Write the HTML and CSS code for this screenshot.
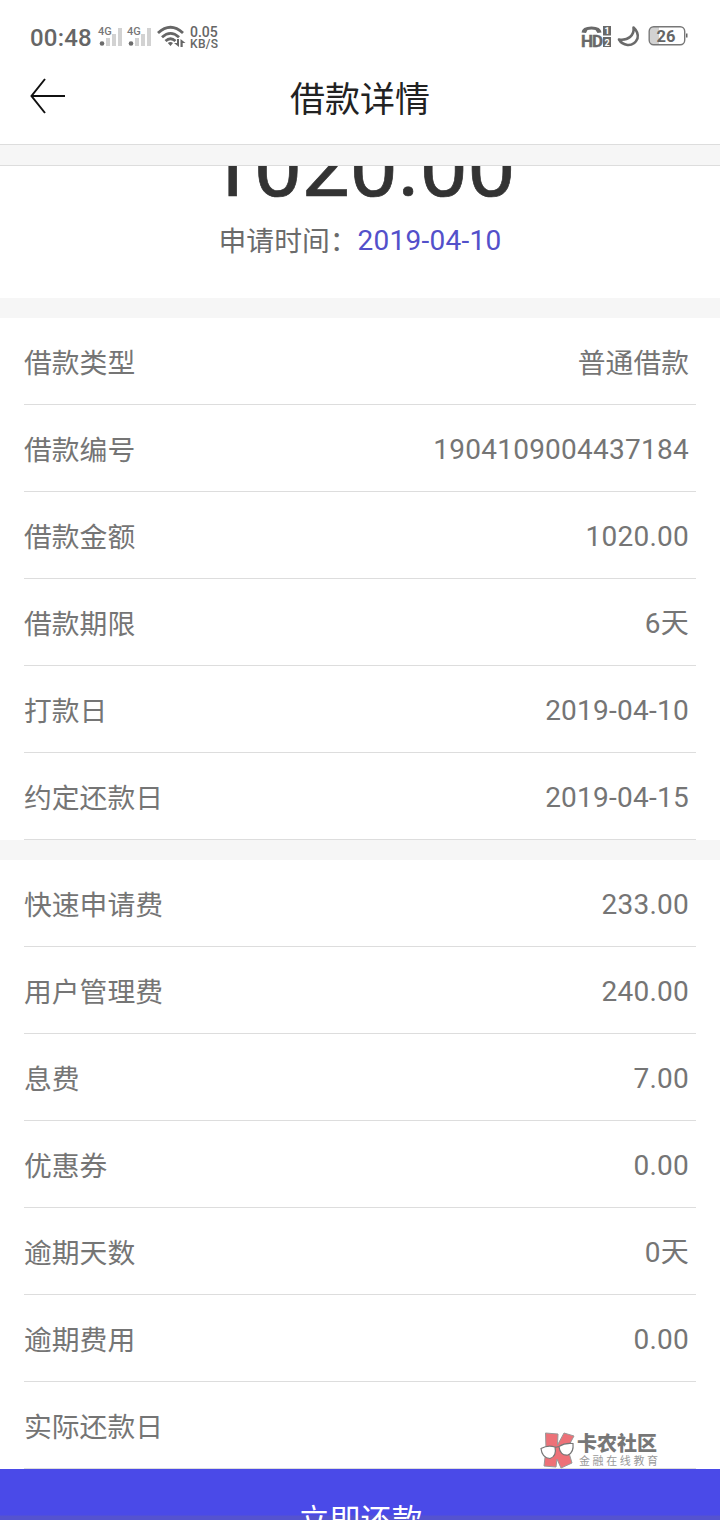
FILE: index.html
```html
<!DOCTYPE html>
<html lang="zh-CN">
<head>
<meta charset="utf-8">
<title>借款详情</title>
<link rel="stylesheet" href="styles.css">
</head>
<body>
<div class="screen">
  <header class="statusbar">
    <span class="clock">00:48</span>
    <svg class="signals" width="54" height="24" viewBox="0 0 54 24">
      <g id="sig">
        <text x="0" y="10" class="net">4G</text>
        <circle cx="4" cy="18.500" r="2.300" fill="#6b6b6b"/>
        <path d="M8 13h4v8H8zM14 9h4v12h-4zM20 3h4v18h-4z" fill="#d2d2d2"/>
      </g>
      <use href="#sig" x="29"/>
    </svg>
    <svg class="wifi" width="30" height="24" viewBox="0 0 30 24">
      <g fill="none" stroke="#666" stroke-width="2.800">
        <path d="M1 8Q13.500 -3.500 26 8"/>
        <path d="M5 12.300Q13.500 4.500 22 12.300"/>
        <path d="M8.500 16Q13.500 11.500 18.500 16"/>
      </g>
      <path d="M10.800 18Q13.500 16 16 18L13.500 21zM22 14v8l-5-4h3v-4zM23.500 14l5 4h-2.800v4h-2.200z" fill="#666"/>
    </svg>
    <div class="speed"><span>0.05</span><span>KB/S</span></div>
    <svg class="hd" width="31" height="24" viewBox="0 0 31 24">
      <path d="M.5 7.500Q1 1.500 10.500 1.500Q20 1.500 20.500 7.500L16.500 8L14.500 5Q10.500 4 6.500 5L5 8z" fill="#696969"/>
      <text x="0" y="21.500" class="hd-text">HD</text>
      <path d="M22 1h8v9.500h-8zM22 12h8v10h-8z" fill="#696969"/>
      <text x="23.500" y="9.300" class="sim">1</text><text x="23.500" y="20.500" class="sim">2</text>
    </svg>
    <svg class="moon" width="24" height="24" viewBox="0 0 24 24">
      <path d="M16.500 2.500Q22 7.500 20.500 13.500Q17.500 20.500 10.500 20Q4.500 19 2 14.500Q9 15.500 13 12Q17.500 8 16.500 2.500z" fill="none" stroke="#6a6a6a" stroke-width="2.600" stroke-linejoin="round"/>
    </svg>
    <svg class="battery" width="41" height="22" viewBox="0 0 41 22">
      <path d="M5 2h6v17H5Q2 19 2 16V5Q2 2 5 2z" fill="#d2d2d2"/>
      <rect x="1.200" y="1.700" width="35.500" height="18" rx="4.500" fill="none" stroke="#777" stroke-width="1.400"/>
      <path d="M38 8.500h1.500v4h-1.500z" fill="#666"/>
      <text x="18" y="16.800" text-anchor="middle" class="charge">26</text>
    </svg>
  </header>
  <nav class="titlebar">
    <svg class="back" width="38" height="38" viewBox="0 0 38 38"><path d="M17 2L3.500 19L17 36M3.500 19H37" fill="none" stroke="#111" stroke-width="2"/></svg>
    <h1>借款详情</h1>
  </nav>
  <div class="band"></div>
  <section class="summary">
    <div class="amount">1020.00</div>
    <div class="applied"><span>申请时间：</span><span class="date">2019-04-10</span></div>
  </section>
  <section class="group">
    <div class="row"><span>借款类型</span><span>普通借款</span></div>
    <div class="row"><span>借款编号</span><span class="num">1904109004437184</span></div>
    <div class="row"><span>借款金额</span><span class="num">1020.00</span></div>
    <div class="row"><span>借款期限</span><span class="num">6天</span></div>
    <div class="row"><span>打款日</span><span class="num">2019-04-10</span></div>
    <div class="row"><span>约定还款日</span><span class="num">2019-04-15</span></div>
  </section>
  <section class="group">
    <div class="row"><span>快速申请费</span><span class="num">233.00</span></div>
    <div class="row"><span>用户管理费</span><span class="num">240.00</span></div>
    <div class="row"><span>息费</span><span class="num">7.00</span></div>
    <div class="row"><span>优惠券</span><span class="num">0.00</span></div>
    <div class="row"><span>逾期天数</span><span class="num">0天</span></div>
    <div class="row"><span>逾期费用</span><span class="num">0.00</span></div>
    <div class="row"><span>实际还款日</span></div>
  </section>
  <div class="watermark">
    <svg width="36" height="38" viewBox="0 0 36 38">
      <path d="M5.500 2l12.500 1-.5 11L24 2l10 3-6.500 12L32 32l-11 5-4-9-1 8-12-1 2-17z" fill="#ed7178" stroke="#999" stroke-width="1"/>
      <path d="M1 17.500Q8 13.500 15 16q2 9-5 11.500Q2 27 1 17.500zM19 15.500Q25 11.500 33 12.500q1 9-5 11.500-8 1-9-8.500zM15 16.500l4-1" fill="#fff" stroke="#777" stroke-width="1.200"/>
    </svg>
    <div class="brand"><b>卡农社区</b><span>金融在线教育</span></div>
  </div>
  <button class="repay">立即还款</button>
</div>
</body>
</html>
```
FILE: styles.css
```css
* { box-sizing: border-box; }
body { margin: 0; background: #fff; font-family: Roboto, "Noto Sans CJK SC", sans-serif; }
.screen { position: relative; width: 720px; height: 1520px; overflow: hidden; display: flex; flex-direction: column; }
.statusbar { height: 70px; flex: none; display: flex; align-items: flex-start; padding: 24px 31px 0 30px; color: #666; }
.statusbar svg { flex: none; overflow: visible; }
.clock { font-size: 24px; line-height: 28px; font-weight: 500; letter-spacing: .2px; width: 68px; }
.signals { margin-top: 1px; }
.net { font: 500 11px Roboto, sans-serif; fill: #777; }
.wifi { margin: 1px 0 0 5px; }
.speed { display: flex; flex-direction: column; font-size: 14px; line-height: 12px; font-weight: 500; margin: 2px auto 0 3px; }
.speed span:last-child { font-size: 12px; line-height: 13px; letter-spacing: .3px; }
.hd { margin-top: 1px; }
.hd-text { font: 700 17px Roboto, sans-serif; fill: #696969; stroke: #696969; stroke-width: .4px; letter-spacing: -1px; }
.sim { font: 700 9px Roboto, sans-serif; fill: #fff; }
.moon { margin: 1px 0 0 5px; }
.battery { margin: 1px 0 0 7px; }
.charge { font: 700 16.500px Roboto, sans-serif; fill: #666; }
.titlebar { height: 75px; flex: none; display: grid; grid-template-columns: 60px 1fr 60px; align-items: start; padding: 7px 28px 0; border-bottom: 1px solid #ddd; }
.titlebar h1 { margin: 3px 0 0; font-size: 35px; line-height: 42px; font-weight: 400; text-align: center; color: #222; }
.band { height: 21px; flex: none; background: #f6f6f6; border-bottom: 1px solid #ddd; }
.summary { height: 132px; flex: none; overflow: hidden; text-align: center; }
.amount { font-size: 86px; line-height: 100px; margin-top: -49px; color: #333; -webkit-text-stroke: .7px #333; letter-spacing: -.5px; padding-left: 1px; }
.applied { display: flex; justify-content: center; font-size: 28px; line-height: 40px; margin-top: 4px; color: #6b6b6b; }
.applied span:first-child { padding-top: 1px; font-size: 27.800px; }
.date { color: #5350ca; letter-spacing: .25px; }
.group { border-top: 20px solid #f6f6f6; flex: none; }
.row { height: 87px; margin: 0 24px; padding: 6px 7px 0 0; border-bottom: 1px solid #ddd; display: flex; justify-content: space-between; align-items: center; font-size: 27.800px; line-height: 40px; color: #757575; }
.num { font-size: 28px; letter-spacing: .25px; padding-bottom: 2px; }
.repay { height: 91px; flex: none; border: 0; padding: 0 0 0 1px; background: linear-gradient(#4a4ae8 46px, #5553cf 47px); color: #fff; font: 31px/97px "Noto Sans CJK SC", sans-serif; }
.watermark { position: absolute; left: 540px; top: 1431px; display: flex; gap: 1px; }
.brand { display: flex; flex-direction: column; color: #777; }
.brand b { font-size: 20px; line-height: 24px; font-weight: 900; padding-top: 1px; }
.brand span { font-size: 11px; line-height: 11px; letter-spacing: 2.600px; margin-left: 2px; color: #999; }
```
